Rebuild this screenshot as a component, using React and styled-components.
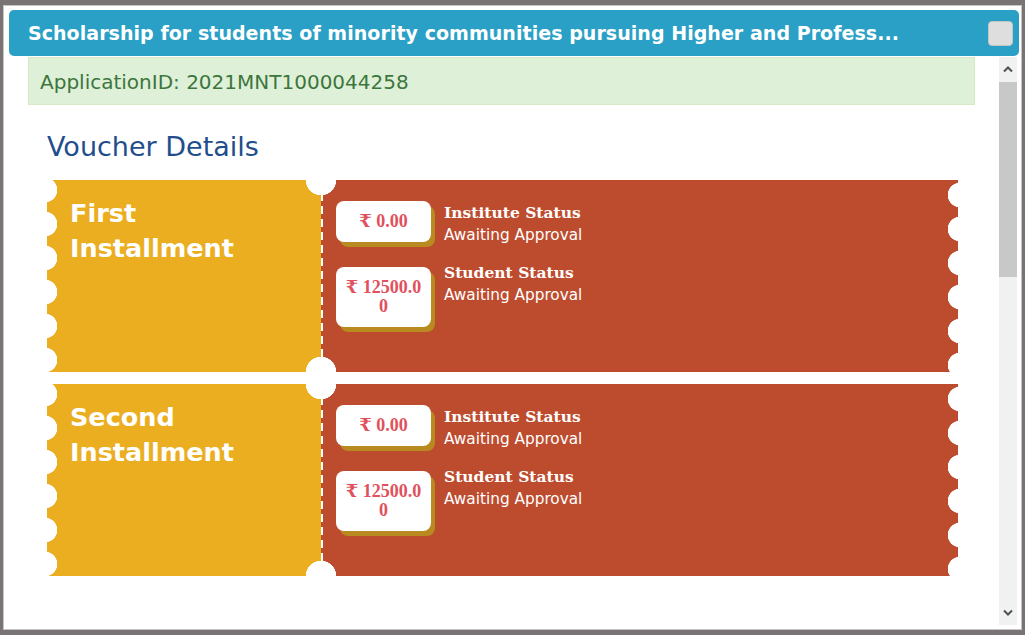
import React from 'react'
import styled, { createGlobalStyle } from 'styled-components'

const GlobalStyle = createGlobalStyle`
  html, body {
    margin: 0;
    padding: 0;
  }
  body {
    font-family: "DejaVu Sans", Verdana, sans-serif;
  }
  * {
    box-sizing: border-box;
  }
`

const installments = [
  {
    title: 'First Installment',
    rows: [
      { amount: '₹ 0.00', label: 'Institute Status', status: 'Awaiting Approval' },
      { amount: '₹ 12500.00', label: 'Student Status', status: 'Awaiting Approval' },
    ],
  },
  {
    title: 'Second Installment',
    rows: [
      { amount: '₹ 0.00', label: 'Institute Status', status: 'Awaiting Approval' },
      { amount: '₹ 12500.00', label: 'Student Status', status: 'Awaiting Approval' },
    ],
  },
]

function Chevron({ down }) {
  return (
    <svg width='10' height='7' viewBox='0 0 10 7'>
      <polyline
        points={down ? '1,1.5 5,5.5 9,1.5' : '1,5.5 5,1.5 9,5.5'}
        fill='none'
        stroke='#505050'
        strokeWidth='2'
      />
    </svg>
  )
}

function App() {
  return (
    <Backdrop>
      <GlobalStyle />
      <Dialog>
        <TitleBar>
          <Title>Scholarship for students of minority communities pursuing Higher and Profess...</Title>
          <CloseButton />
        </TitleBar>
        <Body>
          <Content>
            <Alert>ApplicationID: 2021MNT1000044258</Alert>
            <Section>
              <Heading>Voucher Details</Heading>
              {installments.map((item) => (
                <Ticket key={item.title}>
                  <Stub>
                    <StubTitle>{item.title}</StubTitle>
                  </Stub>
                  <Main>
                    {item.rows.map((row, i) => (
                      <Row key={row.label}>
                        <Amount $offset={i === 0 ? 0 : 6}>{row.amount}</Amount>
                        <Info>
                          <InfoTitle>{row.label}</InfoTitle>
                          <InfoStatus>{row.status}</InfoStatus>
                        </Info>
                      </Row>
                    ))}
                  </Main>
                </Ticket>
              ))}
            </Section>
          </Content>
          <Scrollbar>
            <ScrollButton>
              <Chevron />
            </ScrollButton>
            <Track>
              <Thumb />
            </Track>
            <ScrollButton>
              <Chevron down />
            </ScrollButton>
          </Scrollbar>
        </Body>
      </Dialog>
    </Backdrop>
  )
}

export default App

const Backdrop = styled.div`
  height: 635px;
  display: flex;
  padding: 5px 3px 5px 3px;
  background: #797473;
`

const Dialog = styled.div`
  flex: 1;
  display: flex;
  flex-direction: column;
  background: #fff;
  border: 1px solid #c5c5c5;
  padding: 4px 2px 4px 5px;
  min-width: 0;
`

const TitleBar = styled.div`
  height: 46px;
  flex-shrink: 0;
  display: flex;
  align-items: center;
  justify-content: space-between;
  padding: 0 6px 0 19px;
  background: #2ba0c6;
  border-radius: 5px;
`

const Title = styled.span`
  color: #fff;
  font-weight: bold;
  font-size: 19px;
  letter-spacing: 0.05px;
  white-space: nowrap;
  overflow: hidden;
  text-overflow: ellipsis;
`

const CloseButton = styled.button`
  width: 25px;
  height: 25px;
  flex-shrink: 0;
  padding: 0;
  background: #dedede;
  border: 1px solid #c5c5c5;
  border-radius: 4px;
`

const Body = styled.div`
  flex: 1;
  min-height: 0;
  display: flex;
  margin-top: 1px;
`

const Content = styled.div`
  flex: 1;
  overflow: hidden;
  padding: 0 24px 0 19px;
`

const Alert = styled.div`
  height: 48px;
  display: flex;
  align-items: center;
  padding: 1px 11px 0;
  background: #dff0d8;
  border: 1px solid #d6e9c6;
  color: #3c763d;
  font-size: 20px;
`

const Section = styled.div`
  padding: 0 17px 0 19px;
`

const Heading = styled.h2`
  margin: 26px 0 17px;
  font-weight: normal;
  font-size: 27px;
  line-height: 32px;
  color: #1f4e8c;
`

const Ticket = styled.div`
  height: 192px;
  display: flex;
  margin-bottom: 12px;
`

const Stub = styled.div`
  width: 274px;
  flex-shrink: 0;
  padding: 16px 23px;
  background:
    radial-gradient(circle at 100% 0, #fff 15px, transparent 15.5px),
    radial-gradient(circle at 100% 100%, #fff 15px, transparent 15.5px),
    radial-gradient(circle at -2px 50%, #fff 12px, transparent 12.5px) 0 -7px / 20px 34px repeat-y,
    #ebae20;
`

const StubTitle = styled.div`
  color: #fff;
  font-weight: bold;
  font-size: 25.5px;
  line-height: 35px;
`

const Main = styled.div`
  flex: 1;
  display: flex;
  flex-direction: column;
  gap: 14px;
  padding: 21px 15px;
  background:
    radial-gradient(circle at 0 0, #fff 15px, transparent 15.5px),
    radial-gradient(circle at 0 100%, #fff 15px, transparent 15.5px),
    linear-gradient(#fff 8px, transparent 8px) 0 0 / 2px 13px repeat-y,
    radial-gradient(circle at calc(100% + 2px) 50%, #fff 12px, transparent 12.5px) 100% -2px / 20px 34px repeat-y,
    #bd4c2e;
`

const Row = styled.div`
  display: flex;
  align-items: flex-start;
`

const Amount = styled.div`
  width: 95px;
  flex-shrink: 0;
  margin-top: ${(p) => p.$offset}px;
  padding: 11px 6px 11px;
  background: #fff;
  border-radius: 8px;
  box-shadow: 4px 5px 0 #b88a1f;
  color: #e0515d;
  font-family: "Liberation Serif", "DejaVu Serif", serif;
  font-weight: bold;
  font-size: 18px;
  line-height: 19px;
  text-align: center;
  word-break: break-all;
`

const Info = styled.div`
  margin-left: 13px;
  color: #fff;
`

const InfoTitle = styled.div`
  font-family: "DejaVu Serif", serif;
  font-weight: bold;
  font-size: 15.5px;
  line-height: 23px;
`

const InfoStatus = styled.div`
  font-size: 15.3px;
  line-height: 23px;
`

const Scrollbar = styled.div`
  width: 18px;
  flex-shrink: 0;
  margin-right: 2px;
  display: flex;
  flex-direction: column;
  background: #f1f1f1;
`

const ScrollButton = styled.div`
  height: 25px;
  flex-shrink: 0;
  display: flex;
  align-items: center;
  justify-content: center;
`

const Track = styled.div`
  flex: 1;
`

const Thumb = styled.div`
  height: 195px;
  background: #c8c8c8;
`
